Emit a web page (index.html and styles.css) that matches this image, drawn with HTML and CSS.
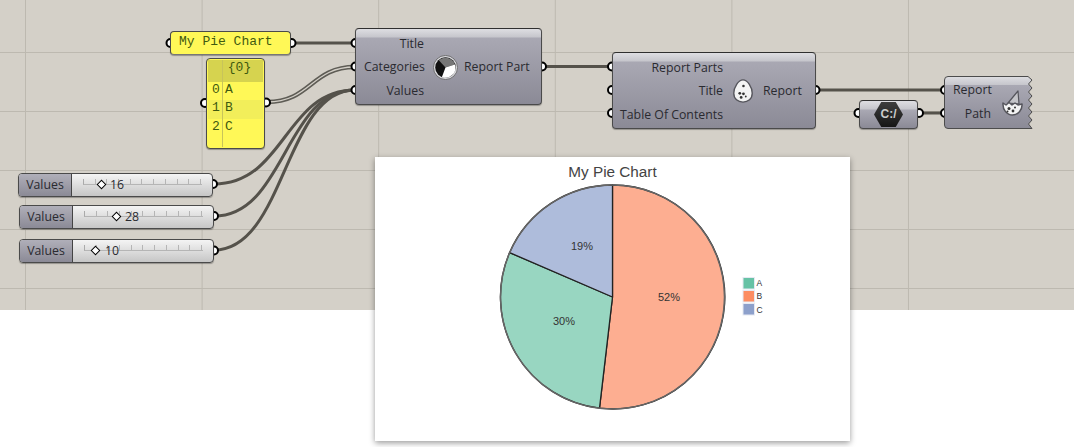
FILE: index.html
```html
<!DOCTYPE html>
<html lang="en">
<head>
<meta charset="utf-8">
<title>My Pie Chart</title>
<link rel="stylesheet" href="styles.css">
</head>
<body>
<main class="canvas">
  <svg class="wires" width="1074" height="310" viewBox="0 0 1074 310">
    <path class="wire" d="M291 43H355"/>
    <path class="wire-list" d="M267 102C311 102 311 67 355 67"/>
    <path class="wire-list-in" d="M267 102C311 102 311 67 355 67"/>
    <path class="wire" d="M214 184C285 184 285 90 355 90"/>
    <path class="wire" d="M214 216C285 216 285 90 355 90"/>
    <path class="wire" d="M214 250C285 250 285 90 355 90"/>
    <path class="wire" d="M543 66.500H612"/>
    <path class="wire" d="M815 90H945"/>
    <path class="wire" d="M919 113H945"/>
    <g class="grip">
      <circle cx="170.500" cy="43" r="4"/><circle cx="291.500" cy="43" r="4"/>
      <circle cx="205" cy="103" r="4"/><circle cx="266" cy="102.500" r="4"/>
      <circle cx="355.500" cy="43" r="4"/><circle cx="355.500" cy="66.500" r="4"/><circle cx="355.500" cy="90" r="4"/>
      <circle cx="542" cy="66.500" r="4"/>
      <circle cx="612" cy="66.500" r="4"/><circle cx="612" cy="90" r="4"/><circle cx="612" cy="113" r="4"/>
      <circle cx="815.500" cy="90" r="4"/>
      <circle cx="945" cy="90" r="4"/><circle cx="945" cy="113" r="4"/>
      <circle cx="858.500" cy="113" r="4"/><circle cx="919" cy="113" r="4"/>
      <circle cx="213" cy="184" r="4"/><circle cx="214" cy="216" r="4"/><circle cx="214" cy="250.500" r="4"/>
    </g>
  </svg>

  <div class="node panel panel-title">My Pie Chart</div>

  <div class="node panel panel-list">
    <div class="list-row list-head"><span class="idx"></span><span class="val val-head">{0}</span></div>
    <div class="list-row"><span class="idx">0</span><span class="val">A</span></div>
    <div class="list-row list-alt"><span class="idx">1</span><span class="val">B</span></div>
    <div class="list-row"><span class="idx">2</span><span class="val">C</span></div>
    <div class="list-rest"><span class="idx"></span></div>
  </div>

  <div class="node comp comp-part">
    <div class="ports ports-in"><span>Title</span><span>Categories</span><span>Values</span></div>
    <svg class="icon" width="25" height="25" viewBox="0 0 28 28">
      <circle cx="14" cy="14" r="13.500" fill="#d8d8dc" stroke="#666" stroke-width="1"/>
      <circle cx="14" cy="14" r="11.500" fill="#111"/>
      <path d="M14 14L6.500 6A11 11 0 0 1 24.500 10.500Z" fill="#777"/>
      <path d="M14 14L24.500 10.500A11 11 0 0 1 10 24.500Z" fill="#fff"/>
    </svg>
    <div class="ports ports-out"><span>Report Part</span></div>
  </div>

  <div class="node comp comp-report">
    <div class="ports ports-in"><span>Report Parts</span><span>Title</span><span>Table Of Contents</span></div>
    <svg class="icon icon-egg" width="22" height="24" viewBox="0 0 22 26">
      <path d="M11 1C16 1 21 9 21 15.500C21 21.500 16.500 25 11 25C5.500 25 1 21.500 1 15.500C1 9 6 1 11 1Z" fill="#f4f4f4" stroke="#55555c" stroke-width="1.500"/>
      <g fill="#333">
        <circle cx="11.500" cy="7.500" r="1.400"/><circle cx="7.500" cy="15.500" r="1.500"/><circle cx="11.500" cy="16" r="1.500"/>
        <circle cx="9" cy="20" r="1.500"/><circle cx="14" cy="19" r="1"/>
      </g>
    </svg>
    <div class="ports ports-out"><span>Report</span></div>
  </div>

  <div class="node comp comp-path">
    <svg class="torn" width="89" height="53" viewBox="0 0 89 53">
      <defs>
        <linearGradient id="tornfill" x1="0" y1="0" x2="0" y2="1">
          <stop offset="0" stop-color="#dedee2"/><stop offset=".16" stop-color="#c6c6cc"/>
          <stop offset=".17" stop-color="#a9a8b3"/><stop offset="1" stop-color="#8b8a96"/>
        </linearGradient>
      </defs>
      <path d="M4 .5H84L88 4L84.500 8L88 12L84.500 16L88 20L84.500 24L88 28L84.500 32L88 36L84.500 40L88 44L84.500 48L88 52.500H4Q.5 52.500 .5 49V4Q.5 .5 4 .5Z" fill="url(#tornfill)" stroke="#4c4c4c"/>
    </svg>
    <div class="ports ports-in"><span>Report</span><span>Path</span></div>
    <svg class="icon icon-hatch" width="22" height="26" viewBox="0 0 22 26">
      <path d="M7 13L17 1L18 14Z" fill="#c4c4c8" stroke="#55555c" stroke-width="1.200" stroke-linejoin="round"/>
      <path d="M2 13L5 15L8 12.500L11 15L14 13L17 15L21 14C21.500 20 17 25 11.500 25C6 25 1.500 20 2 13Z" fill="#f4f4f4" stroke="#55555c" stroke-width="1.500" stroke-linejoin="round"/>
      <g fill="#333"><circle cx="8" cy="18.500" r="1.500"/><circle cx="12" cy="21" r="1.400"/><circle cx="6.500" cy="21.500" r="1"/><circle cx="14" cy="17.500" r="1"/></g>
    </svg>
  </div>

  <div class="node comp comp-file">
    <div class="hex"><span>C:/</span></div>
  </div>

  <div class="node slider slider-a">
    <span class="slider-name">Values</span>
    <div class="track"><i class="rail"></i><i class="thumb" style="left:25.500px"></i><span class="num" style="left:38px">16</span></div>
  </div>
  <div class="node slider slider-b">
    <span class="slider-name">Values</span>
    <div class="track"><i class="rail"></i><i class="thumb" style="left:39.500px"></i><span class="num" style="left:52px">28</span></div>
  </div>
  <div class="node slider slider-c">
    <span class="slider-name">Values</span>
    <div class="track"><i class="rail"></i><i class="thumb" style="left:18.500px"></i><span class="num" style="left:32px">10</span></div>
  </div>
</main>

<section class="chart">
  <svg width="475" height="284" viewBox="0 0 475 284">
    <text class="chart-title" x="237.500" y="20">My Pie Chart</text>
    <path class="slice" fill="#fdae91" d="M237.500 140L237.500 28A112 112 0 1 1 224.500 251.200Z"/>
    <path class="slice" fill="#98d6c1" d="M237.500 140L224.500 251.200A112 112 0 0 1 134.600 95.600Z"/>
    <path class="slice" fill="#aebcdb" d="M237.500 140L134.600 95.600A112 112 0 0 1 237.500 28Z"/>
    <circle class="pie-edge" cx="237.500" cy="140" r="112"/>
    <text class="pct" x="294" y="144">52%</text>
    <text class="pct" x="189" y="168">30%</text>
    <text class="pct" x="207" y="93">19%</text>
    <rect class="key" x="368" y="120.500" width="11.500" height="11.500" fill="#66c2a5"/>
    <rect class="key" x="368" y="133.500" width="11.500" height="11.500" fill="#fc8d62"/>
    <rect class="key" x="368" y="146.500" width="11.500" height="11.500" fill="#8da0cb"/>
    <text class="key-label" x="381.500" y="129">A</text>
    <text class="key-label" x="381.500" y="142">B</text>
    <text class="key-label" x="381.500" y="155.500">C</text>
  </svg>
</section>
</body>
</html>
```
FILE: styles.css
```css
* { box-sizing: border-box; }
html, body { margin: 0; padding: 0; background: #fff; }
body { width: 1074px; height: 447px; position: relative; overflow: hidden; font-family: "Open Sans", "Liberation Sans", sans-serif; }

.canvas {
  position: relative;
  height: 310px;
  background-color: #d4d0c8;
  background-image:
    linear-gradient(#bdb9b0 1px, transparent 1px),
    linear-gradient(90deg, #bdb9b0 1px, transparent 1px);
  background-size: 100% 59px, 176.6px 100%;
  background-position: 0 52px, 25px 0;
}
.wires { position: absolute; left: 0; top: 0; }
.wire { fill: none; stroke: #55524b; stroke-width: 3; }
.wire-list { fill: none; stroke: #5e5c55; stroke-width: 4.500; }
.wire-list-in { fill: none; stroke: #d4d0c8; stroke-width: 1.300; }
.grip circle { fill: #fff; stroke: #000; stroke-width: 2; }

.node { position: absolute; border: 1px solid #4a4a4a; border-radius: 4px; box-shadow: 0 1px 1px rgba(0,0,0,.3); }

.panel { background: #fff857; color: #3f5a10; font-family: "Liberation Mono", monospace; font-size: 13px; }
.panel-title { left: 170px; top: 31px; width: 121px; height: 24px; padding: 1px 0 0 8px; line-height: 18px; border-bottom-color: #777; }
.panel-list { left: 206px; top: 58px; width: 59px; height: 91px; display: flex; flex-direction: column; padding: 1px; overflow: hidden; }
.list-row { display: flex; height: 18.500px; line-height: 15px; }
.list-head { height: 21.500px; background: #d6d34f; }
.list-alt { background: #f2ee5a; }
.list-rest { flex: 1; display: flex; }
.idx { width: 15px; flex: none; padding-left: 4px; border-right: 1px solid #c8c45a; }
.val { flex: 1; padding-left: 2px; }
.val-head { text-align: center; padding-left: 0; padding-right: 7px; }

.comp {
  background: linear-gradient(#dedee2 0, #c6c6cc 8px, #a9a8b3 9px, #8b8a96 100%);
  border-top-color: #2f2f2f;
  color: #2a2a30;
  font-size: 12.300px;
  display: flex;
  align-items: center;
}
.ports { display: flex; flex-direction: column; }
.ports span { height: 23.500px; line-height: 23px; white-space: nowrap; }
.ports-in { text-align: right; }
.comp-part { left: 355px; top: 28px; width: 187px; height: 77px; padding: 1px 0 0 8px; }
.comp-part .ports-in { width: 60px; }
.comp-part .icon { margin: 0 6.500px 0 8.500px; flex: none; }
.comp-report { left: 612px; top: 52px; width: 204px; height: 77px; padding: 1px 0 0 7px; }
.comp-report .ports-in { width: 103px; }
.comp-report .icon { margin: 0 9px 0 9px; flex: none; }
.comp-path { left: 944px; top: 76px; width: 89px; height: 53px; padding: 0 0 2px 9px; background: none; border: 0; box-shadow: none; }
.torn { position: absolute; left: 0; top: 0; }
.comp-path .ports-in { position: relative; width: 38px; text-align: right; }
.comp-path .ports-in span:first-child { text-align: left; }
.comp-path .icon { position: relative; margin-left: 10px; margin-top: 2px; }

.comp-file { left: 859px; top: 100px; width: 59px; height: 29px; justify-content: center; }
.hex {
  width: 29px; height: 25px;
  clip-path: polygon(25% 0, 75% 0, 100% 50%, 75% 100%, 25% 100%, 0 50%);
  background: linear-gradient(#3d3d3d, #161616);
  color: #ccc;
  font: bold 12px/25px "Liberation Sans", sans-serif;
  text-align: center;
}

.slider { display: flex; width: 195px; height: 24px; font-size: 12.300px; color: #2a2a30; background: linear-gradient(#f4f4f4, #c6c6c6); }
.slider-a { left: 18px; top: 172.500px; }
.slider-b { left: 19px; top: 204.500px; }
.slider-c { left: 19px; top: 239px; }
.slider-name { width: 53px; flex: none; text-align: center; line-height: 21px; border-right: 1px solid #444; border-radius: 3px 0 0 3px; background: linear-gradient(#b0afb9, #8b8a96); }
.track { position: relative; flex: 1; }
.rail {
  position: absolute; left: 11px; top: 5px; width: 119px; height: 6px;
  border-left: 1px solid #aaa; border-bottom: 1px solid #b5b5b5;
  background: repeating-linear-gradient(90deg, transparent 0 10.700px, #b5b5b5 10.700px 11.700px);
}
.thumb { position: absolute; top: 7px; width: 7px; height: 7px; background: #fff; border: 1.500px solid #000; transform: rotate(45deg); }
.num { position: absolute; top: 0; line-height: 21px; }

.chart { position: absolute; left: 375px; top: 157px; width: 475px; height: 284px; background: #fff; box-shadow: 0 2px 6px rgba(0,0,0,.4); }
.chart svg { display: block; }
.chart text { font-family: "Liberation Sans", Arial, sans-serif; }
.chart-title { font-size: 15.300px; fill: #444; text-anchor: middle; }
.slice { stroke: #222; stroke-width: 1.300; stroke-linejoin: round; }
.pie-edge { fill: none; stroke: #666; stroke-width: 1.500; }
.pct { font-size: 11px; fill: #333; text-anchor: middle; }
.key { stroke: #e6e9f2; stroke-width: 1; }
.key-label { font-size: 8.500px; fill: #333; }
```
